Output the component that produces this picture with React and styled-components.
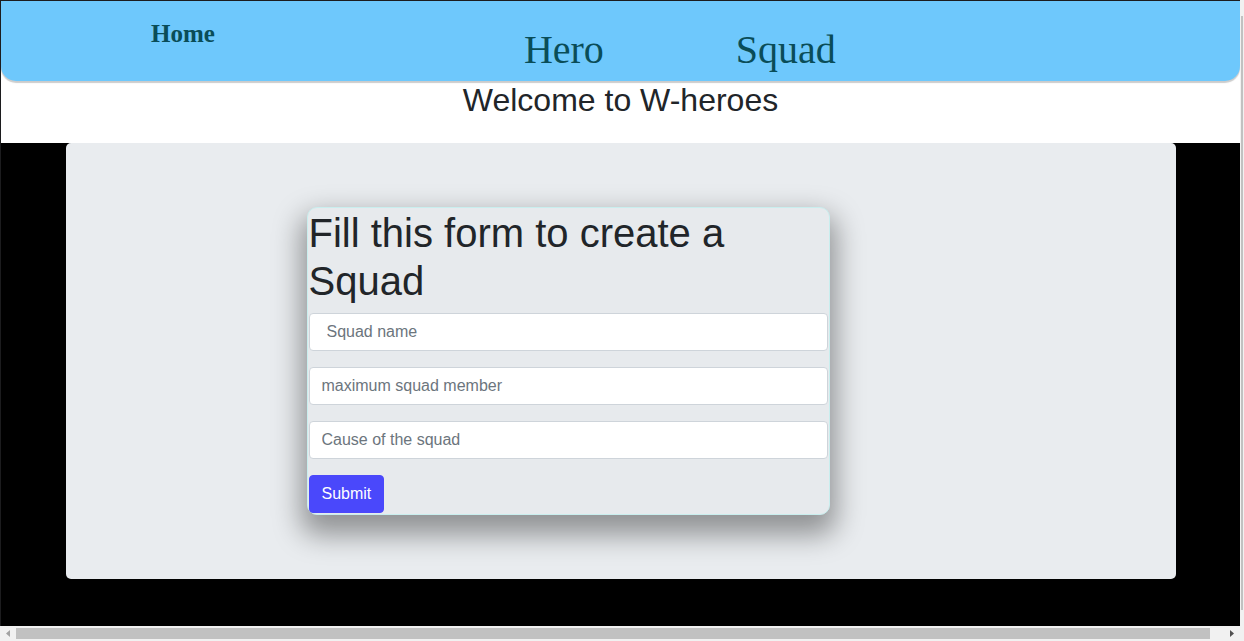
import React from "react";
import styled, { createGlobalStyle } from "styled-components";

const Global = createGlobalStyle`
  html, body { margin: 0; padding: 0; overflow: hidden; }
  body { font-family: "Liberation Sans", Arial, sans-serif; }
  * { box-sizing: border-box; }
`;

const Frame = styled.div`
  width: 1244px;
  height: 641px;
  display: flex;
  flex-direction: column;
  background: #f1f1f1;
`;

const ViewRow = styled.div`
  display: flex;
  height: 626px;
`;

const Page = styled.div`
  flex: 0 0 1240px;
  width: 1240px;
  background: #000;
  border-top: 1px solid #1c1c1e;
  border-left: 1px solid #1c1c1e;
  overflow: hidden;
`;

const Top = styled.header`
  background: #fff;
  padding-bottom: 24px;
`;

const Nav = styled.nav`
  position: relative;
  z-index: 1;
  height: 80px;
  background: #6ec8fc;
  border-radius: 0 0 15px 15px;
  box-shadow: 0 2px 1px rgba(0, 0, 0, 0.2);
  display: flex;
  align-items: flex-start;
  padding-left: 150px;
`;

const NavLink = styled.a`
  font-family: "Liberation Serif", "Times New Roman", serif;
  color: #0a4d58;
  text-decoration: none;
  line-height: 1.2;
  font-size: ${(p) => p.$size}px;
  font-weight: ${(p) => (p.$bold ? 700 : 400)};
  margin-top: ${(p) => p.$top}px;
  margin-left: ${(p) => p.$left}px;
`;

const Welcome = styled.h2`
  margin: 0;
  text-align: center;
  font-size: 32px;
  font-weight: 400;
  line-height: 1.2;
  color: #212529;
`;

const Container = styled.main`
  width: 1110px;
  margin: 0 auto;
`;

const Jumbotron = styled.section`
  background: #e9ecef;
  border-radius: 5px;
  padding: 64px 32px;
`;

const FormCard = styled.form`
  width: 523px;
  margin-left: 209px;
  background: #e7eaed;
  border: 1px solid #c9eeee;
  border-radius: 10px;
  padding: 1px;
  box-shadow: 0 14px 28px 6px rgba(0, 0, 0, 0.38);
`;

const FormTitle = styled.h1`
  margin: 0 0 8px;
  font-size: 40px;
  font-weight: 400;
  line-height: 1.2;
  color: #212529;
`;

const Field = styled.input`
  display: block;
  width: 100%;
  height: 38px;
  margin: 0 0 16px;
  padding: 6px 12px 6px ${(p) => (p.$indent ? 17 : 12)}px;
  font-family: "Liberation Sans", Arial, sans-serif;
  font-size: 16px;
  color: #495057;
  background: #fff;
  border: 1px solid #ced4da;
  border-radius: 4px;
  outline: none;
  &::placeholder { color: #6c757d; opacity: 1; }
`;

const SubmitButton = styled.button`
  display: block;
  height: 38px;
  padding: 6px 12px;
  font-family: "Liberation Sans", Arial, sans-serif;
  font-size: 16px;
  line-height: 1.5;
  color: #fff;
  background: #4a48fb;
  border: 1px solid #4a48fb;
  border-radius: 4px;
`;

const VScroll = styled.div`
  flex: 0 0 4px;
  background: #f1f1f1;
  padding: 16px 1px 0;
`;

const VThumb = styled.div`
  height: 594px;
  background: #c1c1c1;
`;

const HScroll = styled.div`
  height: 15px;
  width: 1240px;
  display: flex;
  align-items: center;
  background: #f1f1f1;
`;

const Arrow = styled.div`
  flex: 0 0 16px;
  height: 15px;
  display: flex;
  align-items: center;
  justify-content: center;
`;

const HThumb = styled.div`
  flex: 0 0 1194px;
  height: 11px;
  background: #c1c1c1;
`;

const Spacer = styled.div`
  flex: 1;
`;

export default function App() {
  return (
    <>
      <Global />
      <Frame>
        <ViewRow>
          <Page>
            <Top>
              <Nav>
                <NavLink href="#" $size={25} $bold $top={18} $left={0}>Home</NavLink>
                <NavLink href="#" $size={40} $top={25} $left={309}>Hero</NavLink>
                <NavLink href="#" $size={40} $top={25} $left={132}>Squad</NavLink>
              </Nav>
              <Welcome>Welcome to W-heroes</Welcome>
            </Top>
            <Container>
              <Jumbotron>
                <FormCard onSubmit={(e) => e.preventDefault()}>
                  <FormTitle>Fill this form to create a Squad</FormTitle>
                  <Field $indent placeholder="Squad name" />
                  <Field placeholder="maximum squad member" />
                  <Field placeholder="Cause of the squad" />
                  <SubmitButton type="submit">Submit</SubmitButton>
                </FormCard>
              </Jumbotron>
            </Container>
          </Page>
          <VScroll>
            <VThumb />
          </VScroll>
        </ViewRow>
        <HScroll>
          <Arrow>
            <svg width="4" height="7" viewBox="0 0 4 7">
              <polygon points="4,0 4,7 0,3.5" fill="#a3a3a3" />
            </svg>
          </Arrow>
          <HThumb />
          <Spacer />
          <Arrow>
            <svg width="4" height="7" viewBox="0 0 4 7">
              <polygon points="0,0 0,7 4,3.5" fill="#505050" />
            </svg>
          </Arrow>
        </HScroll>
      </Frame>
    </>
  );
}
